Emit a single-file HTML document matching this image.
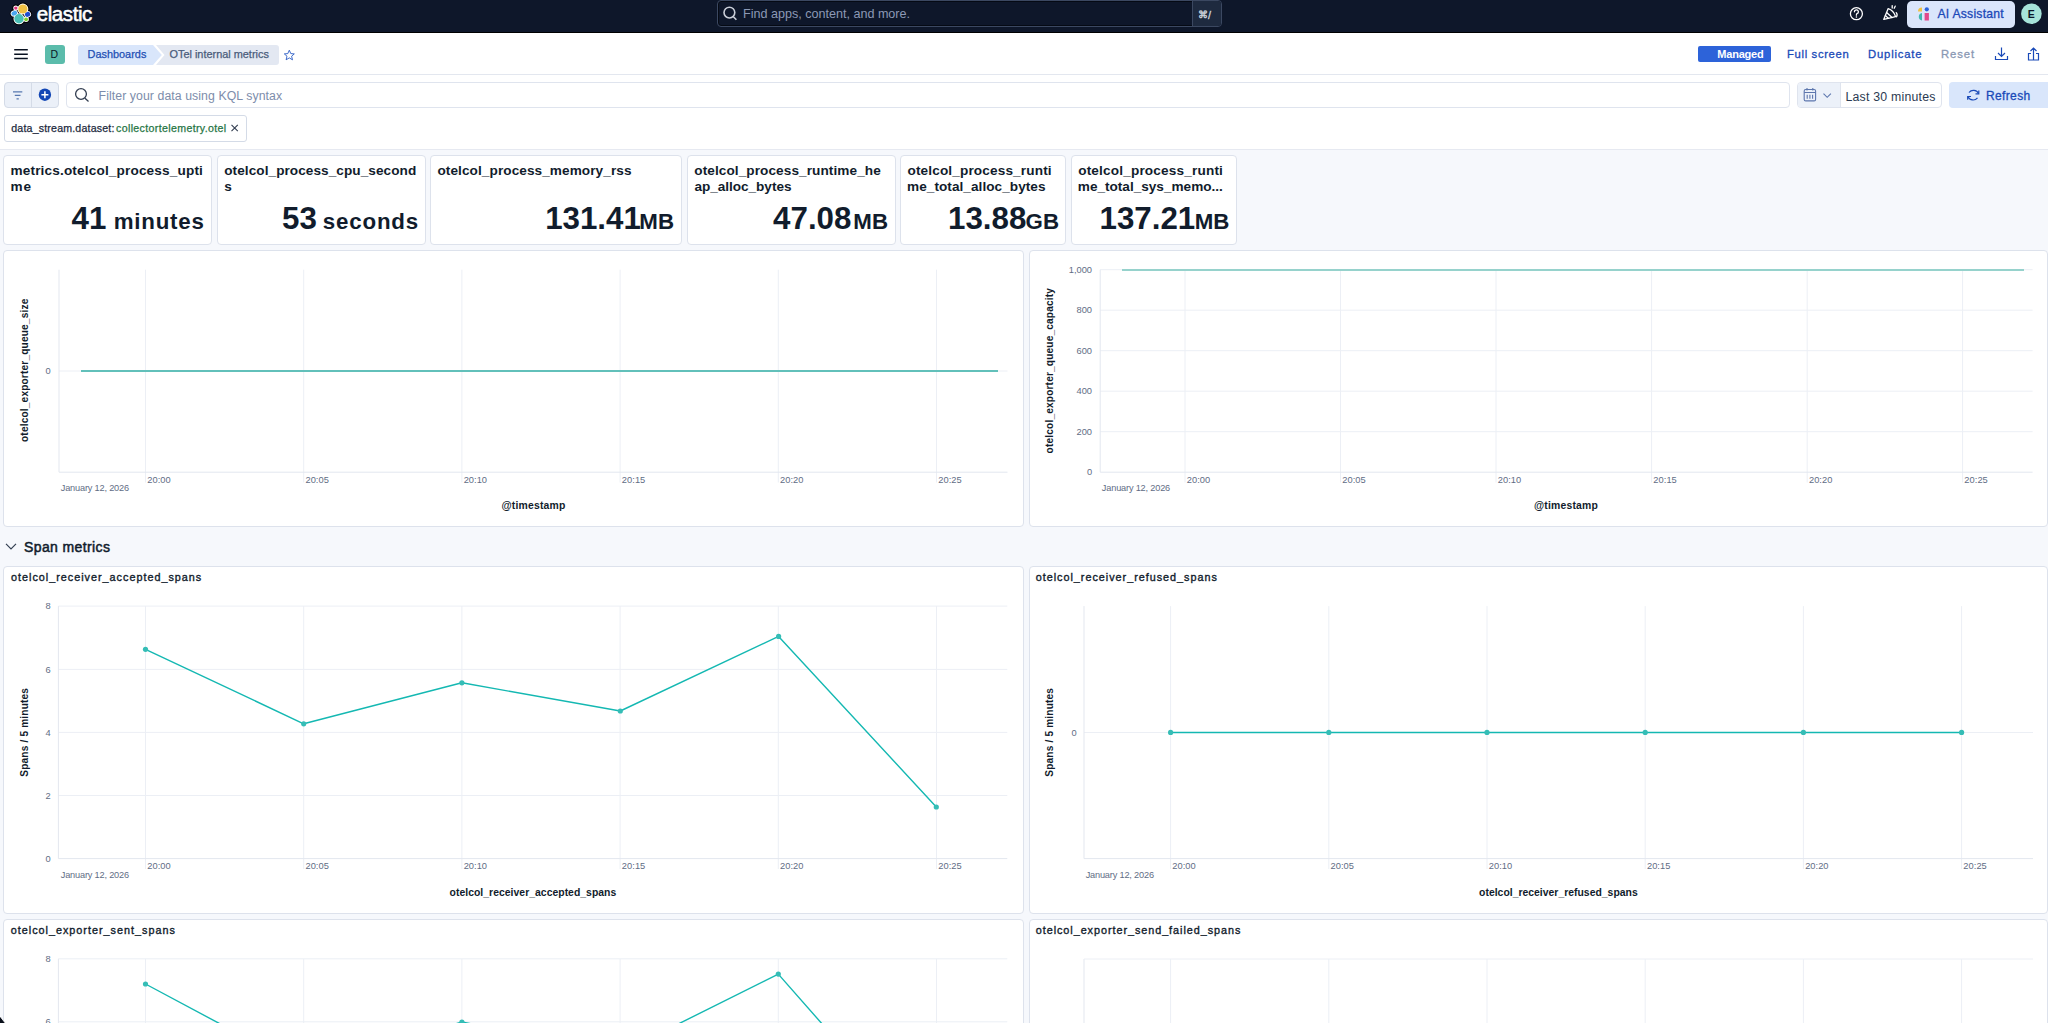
<!DOCTYPE html>
<html><head><meta charset="utf-8"><title>OTel internal metrics - Elastic</title>
<style>
html,body{margin:0;padding:0;}
body{width:2048px;height:1023px;overflow:hidden;position:relative;background:#f6f8fc;font-family:"Liberation Sans",sans-serif;}
.t{position:absolute;white-space:pre;font-family:"Liberation Sans",sans-serif;}
.b{position:absolute;box-sizing:border-box;}
svg{position:absolute;left:0;top:0;}
svg text{font-family:"Liberation Sans",sans-serif;white-space:pre;}
</style></head><body>
<div class="b" style="left:0px;top:0px;width:2048px;height:32px;background:#0e172a;"></div>
<div class="b" style="left:0px;top:32px;width:2048px;height:1px;background:#000;"></div>
<div class="b" style="left:717px;top:0px;width:505px;height:27px;border:1px solid #3b4861;border-radius:4px;background:#0e172a;box-shadow:inset 0 0 0 1px #050a14;"></div>
<div class="b" style="left:1192px;top:1px;width:29px;height:25px;background:#1e2a3f;border-left:1px solid #3b4861;border-radius:0 3px 3px 0;"></div>
<div class="b" style="left:1906.5px;top:0.5px;width:108.0px;height:27.0px;background:#dae5fb;border-radius:5px;"></div>
<div class="b" style="left:0px;top:33px;width:2048px;height:42px;background:#fff;border-bottom:1px solid #e3e7ef;box-shadow:0 1px 2px rgba(40,50,80,.08);"></div>
<div class="b" style="left:45px;top:44.5px;width:19.5px;height:19.5px;background:#5bbcab;border-radius:3px;"></div>
<div class="b" style="left:1698px;top:45.8px;width:73px;height:16.400000000000006px;background:#2d63d9;border-radius:2px;"></div>
<div class="b" style="left:0px;top:75px;width:2048px;height:75px;background:#fff;border-bottom:1px solid #e6e9f1;"></div>
<div class="b" style="left:4px;top:82px;width:55px;height:26px;background:#ebf0f8;border:1px solid #d4dbe7;border-radius:4px;"></div>
<div class="b" style="left:31px;top:83px;width:1px;height:24px;background:#d4dbe7;"></div>
<div class="b" style="left:66px;top:82px;width:1724px;height:26px;background:#fff;border:1px solid #dfe4ee;border-radius:4px;"></div>
<div class="b" style="left:1797px;top:82px;width:145px;height:26px;background:#fff;border:1px solid #dfe4ee;border-radius:4px;"></div>
<div class="b" style="left:1798px;top:83px;width:43px;height:24px;background:#ecf1f9;border-right:1px solid #dfe4ee;border-radius:3px 0 0 3px;"></div>
<div class="b" style="left:1949px;top:82px;width:107px;height:26px;background:#d9e6fb;border-radius:4px;"></div>
<div class="b" style="left:4px;top:115px;width:243px;height:27px;background:#fff;border:1px solid #d4dbe7;border-radius:3px;"></div>
<div class="b" style="left:3px;top:155px;width:209px;height:90px;background:#fff;border:1px solid #dde2ec;border-radius:4px;"></div>
<div class="b" style="left:217px;top:155px;width:209px;height:90px;background:#fff;border:1px solid #dde2ec;border-radius:4px;"></div>
<div class="b" style="left:430px;top:155px;width:252px;height:90px;background:#fff;border:1px solid #dde2ec;border-radius:4px;"></div>
<div class="b" style="left:687px;top:155px;width:209px;height:90px;background:#fff;border:1px solid #dde2ec;border-radius:4px;"></div>
<div class="b" style="left:900px;top:155px;width:166px;height:90px;background:#fff;border:1px solid #dde2ec;border-radius:4px;"></div>
<div class="b" style="left:1071px;top:155px;width:166px;height:90px;background:#fff;border:1px solid #dde2ec;border-radius:4px;"></div>
<div class="b" style="left:3px;top:250px;width:1021px;height:277px;background:#fff;border:1px solid #dde2ec;border-radius:4px;"></div>
<div class="b" style="left:1029px;top:250px;width:1019px;height:277px;background:#fff;border:1px solid #dde2ec;border-radius:4px;"></div>
<div class="b" style="left:3px;top:566px;width:1021px;height:348px;background:#fff;border:1px solid #dde2ec;border-radius:4px;"></div>
<div class="b" style="left:1029px;top:566px;width:1019px;height:348px;background:#fff;border:1px solid #dde2ec;border-radius:4px;"></div>
<div class="b" style="left:3px;top:919px;width:1021px;height:121px;background:#fff;border:1px solid #dde2ec;border-radius:4px;"></div>
<div class="b" style="left:1029px;top:919px;width:1019px;height:121px;background:#fff;border:1px solid #dde2ec;border-radius:4px;"></div>
<svg width="2048" height="1023" viewBox="0 0 2048 1023">
<g stroke="#000" stroke-width="3.6" stroke-linejoin="round"><circle cx="22.9" cy="9.0" r="4.6" fill="#f0c143"/><circle cx="19.0" cy="18.8" r="4.7" fill="#4abfb5"/><circle cx="15.8" cy="8.1" r="1.7" fill="#e0367f"/><ellipse cx="14.3" cy="13.3" rx="2.9" ry="2.2" transform="rotate(-25 14.3 13.3)" fill="#4aa6ef"/><ellipse cx="27.6" cy="14.4" rx="2.7" ry="2.4" transform="rotate(-25 27.6 14.4)" fill="#1f4ccf"/><circle cx="26.1" cy="19.3" r="1.9" fill="#7cd12f"/></g>
<g stroke="#fff" stroke-width="1.7" stroke-linejoin="round"><circle cx="22.9" cy="9.0" r="4.6" fill="#f0c143"/><circle cx="19.0" cy="18.8" r="4.7" fill="#4abfb5"/><circle cx="15.8" cy="8.1" r="1.7" fill="#e0367f"/><ellipse cx="14.3" cy="13.3" rx="2.9" ry="2.2" transform="rotate(-25 14.3 13.3)" fill="#4aa6ef"/><ellipse cx="27.6" cy="14.4" rx="2.7" ry="2.4" transform="rotate(-25 27.6 14.4)" fill="#1f4ccf"/><circle cx="26.1" cy="19.3" r="1.9" fill="#7cd12f"/></g>
<g><circle cx="22.9" cy="9.0" r="4.6" fill="#f0c143"/><circle cx="19.0" cy="18.8" r="4.7" fill="#4abfb5"/><circle cx="15.8" cy="8.1" r="1.7" fill="#e0367f"/><ellipse cx="14.3" cy="13.3" rx="2.9" ry="2.2" transform="rotate(-25 14.3 13.3)" fill="#4aa6ef"/><ellipse cx="27.6" cy="14.4" rx="2.7" ry="2.4" transform="rotate(-25 27.6 14.4)" fill="#1f4ccf"/><circle cx="26.1" cy="19.3" r="1.9" fill="#7cd12f"/></g>
<g fill="none" stroke="#c9ced8" stroke-width="1.6"><circle cx="729.4" cy="12.6" r="5.4"/><path d="M733.4 16.8 L736.4 19.8"/></g>
<g fill="none" stroke="#fff" stroke-width="1.3" stroke-linecap="round"><circle cx="1856.4" cy="13.7" r="6"/><path d="M1854.4 11.8 a2 2 0 1 1 2.6 1.9 q-0.6 0.3 -0.6 1.2 v0.3"/></g><circle cx="1856.4" cy="17" r="0.8" fill="#fff"/>
<g fill="none" stroke="#fff" stroke-width="1.3" stroke-linejoin="round" stroke-linecap="round"><path d="M1883.8 19.3 L1888.2 8.6 Q1893.6 10.2 1895.6 16.6 Z"/><path d="M1886.6 12.6 L1892 17.6 M1885.4 15.6 L1888.6 18.4"/><path d="M1892.2 5.6 v2.4 M1895.2 6.2 l-1 2 M1896.2 12.6 q1.6 1.6 0.4 4.2"/></g>
<g><path d="M1918 11.5 a4 4 0 0 1 4 -4 v4 z" fill="#f1c242"/><circle cx="1926.8" cy="9.3" r="2.1" fill="#2d63d9"/><path d="M1922 13 v7.5 a3.8 3.8 0 0 1 0 -7.5z" fill="#3fb8ae"/><rect x="1924.6" y="13" width="4.3" height="7.5" fill="#e2498a"/></g>
<circle cx="2031.4" cy="13.7" r="10.3" fill="#a6e3d9"/>
<g stroke="#07101f" stroke-width="1.4"><path d="M14.2 49.8 H27.8 M14.2 54.2 H27.8 M14.2 58.5 H27.8"/></g>
<path d="M81 45 H153 L161.8 55 L153 65 H81 a3 3 0 0 1 -3 -3 V48 a3 3 0 0 1 3 -3z" fill="#d9e6fb"/>
<path d="M156 45 H276 a3 3 0 0 1 3 3 V62 a3 3 0 0 1 -3 3 H156 L164.5 55 Z" fill="#e3e8f2"/>
<path d="M289.3 50.2 L290.8 53.6 L294.3 53.9 L291.6 56.2 L292.5 59.8 L289.3 57.9 L286.1 59.8 L287 56.2 L284.3 53.9 L287.8 53.6 Z" fill="none" stroke="#2a5bc4" stroke-width="0.9" stroke-linejoin="round"/>
<g fill="none" stroke="#1a4ab8" stroke-width="1.2"><path d="M2001.5 47.5 V56.5 M1998 53 L2001.5 56.5 L2005 53 M1995.5 56 V59.5 H2007.5 V56"/></g>
<g fill="none" stroke="#1a4ab8" stroke-width="1.2"><path d="M2033.5 59.5 V48 M2030.5 51 L2033.5 48 L2036.5 51 M2031 53.5 H2028.5 V60 H2038.5 V53.5 H2036"/></g>
<g stroke="#5878b0" stroke-width="1.2"><path d="M13 91.8 H22.3 M14.8 95.3 H20.5 M16.5 98.8 H18.8"/></g>
<circle cx="44.9" cy="94.7" r="6.2" fill="#1246b5"/><path d="M44.9 91.2 V98.2 M41.4 94.7 H48.4" stroke="#fff" stroke-width="1.5"/>
<g fill="none" stroke="#343f52" stroke-width="1.3"><circle cx="81" cy="94" r="5.4"/><path d="M85 98.3 L88.5 101.5"/></g>
<g fill="none" stroke="#5c76ad" stroke-width="1.1"><rect x="1804.2" y="89.5" width="11.4" height="11.4" rx="1.5"/><path d="M1804.2 92.5 H1815.6 M1807 88 V90.5 M1812.8 88 V90.5 M1807.2 94.8 V98.8 M1809.9 94.8 V98.8 M1812.6 94.8 V98.8"/></g>
<path d="M1823.5 93.6 L1827.2 97.3 L1830.9 93.6" fill="none" stroke="#5c76ad" stroke-width="1.1"/>
<g fill="none" stroke="#1a4ab8" stroke-width="1.2"><path d="M1969 92.5 A5.6 5.6 0 0 1 1978.5 93.5"/><path d="M1977.5 97.8 A5.6 5.6 0 0 1 1968 96.8"/><path d="M1978.8 90.5 V93.8 H1975.5 M1967.7 99.8 V96.5 H1971"/></g>
<path d="M231.5 124.8 L237.8 131.1 M237.8 124.8 L231.5 131.1" stroke="#343f52" stroke-width="1.1"/>
<path d="M6 543.8 L11 548.8 L16 543.8" fill="none" stroke="#343f52" stroke-width="1.2"/>
<path d="M145.5 269.7 V482.5" stroke="#eceff5" stroke-width="1"/>
<path d="M303.7 269.7 V482.5" stroke="#eceff5" stroke-width="1"/>
<path d="M461.9 269.7 V482.5" stroke="#eceff5" stroke-width="1"/>
<path d="M620.1 269.7 V482.5" stroke="#eceff5" stroke-width="1"/>
<path d="M778.3 269.7 V482.5" stroke="#eceff5" stroke-width="1"/>
<path d="M936.5 269.7 V482.5" stroke="#eceff5" stroke-width="1"/>
<path d="M59 371 H1007.5" stroke="#eceff5" stroke-width="1"/>
<path d="M59 269.7 V472.2 H1007.5" fill="none" stroke="#e3e7ef" stroke-width="1"/>
<path d="M81 371 H998" stroke="#62c0ba" stroke-width="2"/>
<text x="45.49" y="374.30" font-size="9.30" font-weight="400" fill="#5f6d85">0</text>
<text x="147.23" y="482.70" font-size="9.30" font-weight="400" fill="#5f6d85" letter-spacing="0.035">20:00</text>
<text x="305.44" y="482.70" font-size="9.30" font-weight="400" fill="#5f6d85" letter-spacing="0.041">20:05</text>
<text x="463.63" y="482.70" font-size="9.30" font-weight="400" fill="#5f6d85" letter-spacing="0.035">20:10</text>
<text x="621.84" y="482.70" font-size="9.30" font-weight="400" fill="#5f6d85" letter-spacing="0.041">20:15</text>
<text x="780.03" y="482.70" font-size="9.30" font-weight="400" fill="#5f6d85" letter-spacing="0.035">20:20</text>
<text x="938.24" y="482.70" font-size="9.30" font-weight="400" fill="#5f6d85" letter-spacing="0.041">20:25</text>
<text x="60.76" y="491.00" font-size="9.20" font-weight="400" fill="#5f6d85" letter-spacing="-0.178">January 12, 2026</text>
<text transform="translate(24.10,370.30) rotate(-90)" x="-71.70" y="3.66" font-size="10.10" font-weight="700" fill="#111c2c" letter-spacing="0.180">otelcol_exporter_queue_size</text>
<text x="501.40" y="509.00" font-size="10.40" font-weight="700" fill="#111c2c" letter-spacing="0.208">@timestamp</text>
<path d="M1185 269.7 V482.5" stroke="#eceff5" stroke-width="1"/>
<path d="M1340.5 269.7 V482.5" stroke="#eceff5" stroke-width="1"/>
<path d="M1496 269.7 V482.5" stroke="#eceff5" stroke-width="1"/>
<path d="M1651.6 269.7 V482.5" stroke="#eceff5" stroke-width="1"/>
<path d="M1807.2 269.7 V482.5" stroke="#eceff5" stroke-width="1"/>
<path d="M1962.6 269.7 V482.5" stroke="#eceff5" stroke-width="1"/>
<path d="M1100.2 310.2 H2032.6" stroke="#eceff5" stroke-width="1"/>
<path d="M1100.2 350.7 H2032.6" stroke="#eceff5" stroke-width="1"/>
<path d="M1100.2 391.2 H2032.6" stroke="#eceff5" stroke-width="1"/>
<path d="M1100.2 431.7 H2032.6" stroke="#eceff5" stroke-width="1"/>
<path d="M1100.2 269.7 H2032.6" stroke="#eceff5" stroke-width="1"/>
<path d="M1100.2 269.7 V472.2 H2032.6" fill="none" stroke="#e3e7ef" stroke-width="1"/>
<path d="M1122 270 H2024" stroke="#96d2cc" stroke-width="2"/>
<text x="1068.78" y="272.70" font-size="9.30" font-weight="400" fill="#5f6d85">1,000</text>
<text x="1076.54" y="313.40" font-size="9.30" font-weight="400" fill="#5f6d85">800</text>
<text x="1076.54" y="353.90" font-size="9.30" font-weight="400" fill="#5f6d85">600</text>
<text x="1076.54" y="394.40" font-size="9.30" font-weight="400" fill="#5f6d85">400</text>
<text x="1076.54" y="434.90" font-size="9.30" font-weight="400" fill="#5f6d85">200</text>
<text x="1086.89" y="475.20" font-size="9.30" font-weight="400" fill="#5f6d85">0</text>
<text x="1186.74" y="482.70" font-size="9.30" font-weight="400" fill="#5f6d85" letter-spacing="0.035">20:00</text>
<text x="1342.24" y="482.70" font-size="9.30" font-weight="400" fill="#5f6d85" letter-spacing="0.041">20:05</text>
<text x="1497.74" y="482.70" font-size="9.30" font-weight="400" fill="#5f6d85" letter-spacing="0.035">20:10</text>
<text x="1653.34" y="482.70" font-size="9.30" font-weight="400" fill="#5f6d85" letter-spacing="0.041">20:15</text>
<text x="1808.94" y="482.70" font-size="9.30" font-weight="400" fill="#5f6d85" letter-spacing="0.035">20:20</text>
<text x="1964.34" y="482.70" font-size="9.30" font-weight="400" fill="#5f6d85" letter-spacing="0.041">20:25</text>
<text x="1101.86" y="491.00" font-size="9.20" font-weight="400" fill="#5f6d85" letter-spacing="-0.178">January 12, 2026</text>
<text transform="translate(1049.10,370.50) rotate(-90)" x="-82.90" y="3.66" font-size="10.10" font-weight="700" fill="#111c2c" letter-spacing="0.182">otelcol_exporter_queue_capacity</text>
<text x="1533.90" y="509.00" font-size="10.40" font-weight="700" fill="#111c2c" letter-spacing="0.208">@timestamp</text>
<path d="M145.5 606.1 V869" stroke="#eceff5" stroke-width="1"/>
<path d="M303.7 606.1 V869" stroke="#eceff5" stroke-width="1"/>
<path d="M461.9 606.1 V869" stroke="#eceff5" stroke-width="1"/>
<path d="M620.1 606.1 V869" stroke="#eceff5" stroke-width="1"/>
<path d="M778.3 606.1 V869" stroke="#eceff5" stroke-width="1"/>
<path d="M936.5 606.1 V869" stroke="#eceff5" stroke-width="1"/>
<path d="M58.4 606.1 H1007.3" stroke="#eceff5" stroke-width="1"/>
<path d="M58.4 669.4 H1007.3" stroke="#eceff5" stroke-width="1"/>
<path d="M58.4 732.4 H1007.3" stroke="#eceff5" stroke-width="1"/>
<path d="M58.4 795.5 H1007.3" stroke="#eceff5" stroke-width="1"/>
<path d="M58.4 606.1 V858.6 H1007.3" fill="none" stroke="#e3e7ef" stroke-width="1"/>
<text x="45.53" y="609.40" font-size="9.30" font-weight="400" fill="#5f6d85">8</text>
<text x="45.53" y="672.70" font-size="9.30" font-weight="400" fill="#5f6d85">6</text>
<text x="45.39" y="735.70" font-size="9.30" font-weight="400" fill="#5f6d85">4</text>
<text x="45.60" y="798.80" font-size="9.30" font-weight="400" fill="#5f6d85">2</text>
<text x="45.49" y="861.90" font-size="9.30" font-weight="400" fill="#5f6d85">0</text>
<polyline points="145.5,649.3 303.7,723.8 461.9,682.8 620.3,711 778.6,636.4 936.3,807" fill="none" stroke="#14b8b2" stroke-width="1.4" stroke-linejoin="round"/>
<circle cx="145.5" cy="649.3" r="2.6" fill="#35bdb6"/>
<circle cx="303.7" cy="723.8" r="2.6" fill="#35bdb6"/>
<circle cx="461.9" cy="682.8" r="2.6" fill="#35bdb6"/>
<circle cx="620.3" cy="711" r="2.6" fill="#35bdb6"/>
<circle cx="778.6" cy="636.4" r="2.6" fill="#35bdb6"/>
<circle cx="936.3" cy="807" r="2.6" fill="#35bdb6"/>
<text x="147.23" y="869.40" font-size="9.30" font-weight="400" fill="#5f6d85" letter-spacing="0.035">20:00</text>
<text x="305.44" y="869.40" font-size="9.30" font-weight="400" fill="#5f6d85" letter-spacing="0.041">20:05</text>
<text x="463.63" y="869.40" font-size="9.30" font-weight="400" fill="#5f6d85" letter-spacing="0.035">20:10</text>
<text x="621.84" y="869.40" font-size="9.30" font-weight="400" fill="#5f6d85" letter-spacing="0.041">20:15</text>
<text x="780.03" y="869.40" font-size="9.30" font-weight="400" fill="#5f6d85" letter-spacing="0.035">20:20</text>
<text x="938.24" y="869.40" font-size="9.30" font-weight="400" fill="#5f6d85" letter-spacing="0.041">20:25</text>
<text x="60.76" y="878.00" font-size="9.20" font-weight="400" fill="#5f6d85" letter-spacing="-0.178">January 12, 2026</text>
<text transform="translate(24.10,732.40) rotate(-90)" x="-44.30" y="3.66" font-size="10.10" font-weight="700" fill="#111c2c" letter-spacing="0.177">Spans / 5 minutes</text>
<text x="449.58" y="896.00" font-size="10.40" font-weight="700" fill="#111c2c" letter-spacing="0.031">otelcol_receiver_accepted_spans</text>
<path d="M1170.6 606.1 V869" stroke="#eceff5" stroke-width="1"/>
<path d="M1328.8 606.1 V869" stroke="#eceff5" stroke-width="1"/>
<path d="M1487 606.1 V869" stroke="#eceff5" stroke-width="1"/>
<path d="M1645.2 606.1 V869" stroke="#eceff5" stroke-width="1"/>
<path d="M1803.4 606.1 V869" stroke="#eceff5" stroke-width="1"/>
<path d="M1961.6 606.1 V869" stroke="#eceff5" stroke-width="1"/>
<path d="M1084 732.5 H2033" stroke="#eceff5" stroke-width="1"/>
<path d="M1084 606.1 V858.6 H2033" fill="none" stroke="#e3e7ef" stroke-width="1"/>
<text x="1071.49" y="735.70" font-size="9.30" font-weight="400" fill="#5f6d85">0</text>
<path d="M1170.6 732.5 H1961.6" stroke="#14b8b2" stroke-width="1.3"/>
<circle cx="1170.6" cy="732.4" r="2.6" fill="#35bdb6"/>
<circle cx="1328.8" cy="732.4" r="2.6" fill="#35bdb6"/>
<circle cx="1487" cy="732.4" r="2.6" fill="#35bdb6"/>
<circle cx="1645.2" cy="732.4" r="2.6" fill="#35bdb6"/>
<circle cx="1803.4" cy="732.4" r="2.6" fill="#35bdb6"/>
<circle cx="1961.6" cy="732.4" r="2.6" fill="#35bdb6"/>
<text x="1172.34" y="869.40" font-size="9.30" font-weight="400" fill="#5f6d85" letter-spacing="0.035">20:00</text>
<text x="1330.54" y="869.40" font-size="9.30" font-weight="400" fill="#5f6d85" letter-spacing="0.041">20:05</text>
<text x="1488.74" y="869.40" font-size="9.30" font-weight="400" fill="#5f6d85" letter-spacing="0.035">20:10</text>
<text x="1646.94" y="869.40" font-size="9.30" font-weight="400" fill="#5f6d85" letter-spacing="0.041">20:15</text>
<text x="1805.14" y="869.40" font-size="9.30" font-weight="400" fill="#5f6d85" letter-spacing="0.035">20:20</text>
<text x="1963.34" y="869.40" font-size="9.30" font-weight="400" fill="#5f6d85" letter-spacing="0.041">20:25</text>
<text x="1085.66" y="878.00" font-size="9.20" font-weight="400" fill="#5f6d85" letter-spacing="-0.178">January 12, 2026</text>
<text transform="translate(1049.40,732.40) rotate(-90)" x="-44.30" y="3.66" font-size="10.10" font-weight="700" fill="#111c2c" letter-spacing="0.177">Spans / 5 minutes</text>
<text x="1479.08" y="896.00" font-size="10.40" font-weight="700" fill="#111c2c" letter-spacing="0.012">otelcol_receiver_refused_spans</text>
<path d="M145.5 958.8 V1023" stroke="#eceff5" stroke-width="1"/>
<path d="M303.7 958.8 V1023" stroke="#eceff5" stroke-width="1"/>
<path d="M461.9 958.8 V1023" stroke="#eceff5" stroke-width="1"/>
<path d="M620.1 958.8 V1023" stroke="#eceff5" stroke-width="1"/>
<path d="M778.3 958.8 V1023" stroke="#eceff5" stroke-width="1"/>
<path d="M936.5 958.8 V1023" stroke="#eceff5" stroke-width="1"/>
<path d="M58.4 958.8 H1007.3" stroke="#eceff5" stroke-width="1"/>
<path d="M58.4 1021.8 H1007.3" stroke="#eceff5" stroke-width="1"/>
<path d="M58.4 958.8 V1100 H1007.3" fill="none" stroke="#e3e7ef" stroke-width="1"/>
<text x="45.53" y="962.10" font-size="9.30" font-weight="400" fill="#5f6d85">8</text>
<text x="45.53" y="1025.10" font-size="9.30" font-weight="400" fill="#5f6d85">6</text>
<polyline points="145.5,984 303.7,1068.5 461.9,1022 620.1,1053 778.3,974.1 936.5,1154" fill="none" stroke="#14b8b2" stroke-width="1.4" stroke-linejoin="round"/>
<circle cx="145.5" cy="984" r="2.6" fill="#35bdb6"/>
<circle cx="303.7" cy="1068.5" r="2.6" fill="#35bdb6"/>
<circle cx="461.9" cy="1022" r="2.6" fill="#35bdb6"/>
<circle cx="620.1" cy="1053" r="2.6" fill="#35bdb6"/>
<circle cx="778.3" cy="974.1" r="2.6" fill="#35bdb6"/>
<circle cx="936.5" cy="1154" r="2.6" fill="#35bdb6"/>
<path d="M1170.6 959 V1023" stroke="#eceff5" stroke-width="1"/>
<path d="M1328.8 959 V1023" stroke="#eceff5" stroke-width="1"/>
<path d="M1487 959 V1023" stroke="#eceff5" stroke-width="1"/>
<path d="M1645.2 959 V1023" stroke="#eceff5" stroke-width="1"/>
<path d="M1803.4 959 V1023" stroke="#eceff5" stroke-width="1"/>
<path d="M1961.6 959 V1023" stroke="#eceff5" stroke-width="1"/>
<path d="M1084 959 V1100 H2033" fill="none" stroke="#e3e7ef" stroke-width="1"/>
<path d="M1084 959 H2033" stroke="#eceff5" stroke-width="1"/>
<path d="M-1 1015 L6 1024 H-1 Z" fill="#0a0f1a" stroke="#fff" stroke-width="0.8"/>
</svg>
<span class="t" style="left:36.73px;top:3.95px;font-size:20.50px;line-height:20.50px;font-weight:400;color:#ffffff;letter-spacing:-0.414px;-webkit-text-stroke:0.55px #fff;">elastic</span>
<span class="t" style="left:742.96px;top:7.93px;font-size:12.60px;line-height:12.60px;font-weight:400;color:#8c99b5;letter-spacing:-0.008px;">Find apps, content, and more.</span>
<span class="t" style="left:1198.05px;top:10.46px;font-size:9.50px;line-height:9.50px;font-weight:400;color:#d0d5de;letter-spacing:0.000px;-webkit-text-stroke:0.4px currentColor;">⌘</span>
<span class="t" style="left:1208.00px;top:9.69px;font-size:11.00px;line-height:11.00px;font-weight:400;color:#d0d5de;letter-spacing:0.000px;-webkit-text-stroke:0.3px currentColor;">/</span>
<span class="t" style="left:1937.47px;top:7.97px;font-size:12.20px;line-height:12.20px;font-weight:400;color:#1c49b8;letter-spacing:0.234px;-webkit-text-stroke:0.3px currentColor;">AI Assistant</span>
<span class="t" style="left:2027.79px;top:8.71px;font-size:10.50px;line-height:10.50px;font-weight:700;color:#0b1628;letter-spacing:0.000px;">E</span>
<span class="t" style="left:50.43px;top:48.51px;font-size:10.50px;line-height:10.50px;font-weight:400;color:#0b1628;letter-spacing:0.000px;">D</span>
<span class="t" style="left:87.50px;top:48.57px;font-size:10.90px;line-height:10.90px;font-weight:400;color:#1e4fb4;letter-spacing:0.011px;-webkit-text-stroke:0.25px currentColor;">Dashboards</span>
<span class="t" style="left:169.48px;top:48.57px;font-size:10.90px;line-height:10.90px;font-weight:400;color:#4a5c7b;letter-spacing:0.007px;-webkit-text-stroke:0.25px currentColor;">OTel internal metrics</span>
<span class="t" style="left:1717.26px;top:49.09px;font-size:11.00px;line-height:11.00px;font-weight:700;color:#ffffff;letter-spacing:-0.200px;">Managed</span>
<span class="t" style="left:1787.07px;top:48.93px;font-size:11.30px;line-height:11.30px;font-weight:400;color:#1a4ab8;letter-spacing:0.638px;-webkit-text-stroke:0.3px currentColor;">Full screen</span>
<span class="t" style="left:1868.07px;top:48.93px;font-size:11.30px;line-height:11.30px;font-weight:400;color:#1a4ab8;letter-spacing:0.790px;-webkit-text-stroke:0.3px currentColor;">Duplicate</span>
<span class="t" style="left:1941.07px;top:48.93px;font-size:11.30px;line-height:11.30px;font-weight:400;color:#8a98b3;letter-spacing:0.874px;-webkit-text-stroke:0.3px currentColor;">Reset</span>
<span class="t" style="left:98.59px;top:90.09px;font-size:12.30px;line-height:12.30px;font-weight:400;color:#7d8dab;letter-spacing:0.068px;">Filter your data using KQL syntax</span>
<span class="t" style="left:1845.39px;top:90.59px;font-size:12.30px;line-height:12.30px;font-weight:400;color:#2b3a51;letter-spacing:0.229px;">Last 30 minutes</span>
<span class="t" style="left:1986.01px;top:90.14px;font-size:12.00px;line-height:12.00px;font-weight:400;color:#1a4ab8;letter-spacing:0.357px;-webkit-text-stroke:0.3px currentColor;">Refresh</span>
<span class="t" style="left:11.25px;top:123.33px;font-size:10.60px;line-height:10.60px;font-weight:400;color:#1d2a3e;letter-spacing:0.190px;-webkit-text-stroke:0.25px currentColor;">data_stream.dataset:</span>
<span class="t" style="left:116.05px;top:123.33px;font-size:10.60px;line-height:10.60px;font-weight:400;color:#267544;letter-spacing:0.357px;-webkit-text-stroke:0.25px currentColor;">collectortelemetry.otel</span>
<span class="t" style="left:10.52px;top:164.49px;font-size:13.60px;line-height:13.60px;font-weight:700;color:#111c2c;letter-spacing:0.157px;">metrics.otelcol_process_upti</span>
<span class="t" style="left:10.52px;top:180.29px;font-size:13.60px;line-height:13.60px;font-weight:700;color:#111c2c;letter-spacing:0.774px;">me</span>
<span class="t" style="left:224.26px;top:164.49px;font-size:13.60px;line-height:13.60px;font-weight:700;color:#111c2c;letter-spacing:0.066px;">otelcol_process_cpu_second</span>
<span class="t" style="left:224.32px;top:180.29px;font-size:13.60px;line-height:13.60px;font-weight:700;color:#111c2c;letter-spacing:0.000px;">s</span>
<span class="t" style="left:437.46px;top:164.49px;font-size:13.60px;line-height:13.60px;font-weight:700;color:#111c2c;letter-spacing:0.084px;">otelcol_process_memory_rss</span>
<span class="t" style="left:694.26px;top:164.49px;font-size:13.60px;line-height:13.60px;font-weight:700;color:#111c2c;letter-spacing:0.087px;">otelcol_process_runtime_he</span>
<span class="t" style="left:694.39px;top:180.29px;font-size:13.60px;line-height:13.60px;font-weight:700;color:#111c2c;letter-spacing:-0.028px;">ap_alloc_bytes</span>
<span class="t" style="left:907.46px;top:164.49px;font-size:13.60px;line-height:13.60px;font-weight:700;color:#111c2c;letter-spacing:0.143px;">otelcol_process_runti</span>
<span class="t" style="left:907.12px;top:180.29px;font-size:13.60px;line-height:13.60px;font-weight:700;color:#111c2c;letter-spacing:0.045px;">me_total_alloc_bytes</span>
<span class="t" style="left:1078.16px;top:164.49px;font-size:13.60px;line-height:13.60px;font-weight:700;color:#111c2c;letter-spacing:0.173px;">otelcol_process_runti</span>
<span class="t" style="left:1077.82px;top:180.29px;font-size:13.60px;line-height:13.60px;font-weight:700;color:#111c2c;letter-spacing:-0.002px;">me_total_sys_memo...</span>
<span class="t" style="left:71.62px;top:203.40px;font-size:31.30px;line-height:31.30px;font-weight:700;color:#111c2c;">41</span>
<span class="t" style="left:113.65px;top:211.02px;font-size:22.30px;line-height:22.30px;font-weight:700;color:#111c2c;letter-spacing:0.796px;">minutes</span>
<span class="t" style="left:282.05px;top:203.40px;font-size:31.30px;line-height:31.30px;font-weight:700;color:#111c2c;">53</span>
<span class="t" style="left:322.82px;top:211.02px;font-size:22.30px;line-height:22.30px;font-weight:700;color:#111c2c;letter-spacing:0.824px;">seconds</span>
<span class="t" style="left:545.16px;top:203.40px;font-size:31.30px;line-height:31.30px;font-weight:700;color:#111c2c;">131.41</span>
<span class="t" style="left:639.33px;top:211.02px;font-size:22.30px;line-height:22.30px;font-weight:700;color:#111c2c;">MB</span>
<span class="t" style="left:773.11px;top:203.40px;font-size:31.30px;line-height:31.30px;font-weight:700;color:#111c2c;">47.08</span>
<span class="t" style="left:853.33px;top:211.02px;font-size:22.30px;line-height:22.30px;font-weight:700;color:#111c2c;">MB</span>
<span class="t" style="left:948.01px;top:203.40px;font-size:31.30px;line-height:31.30px;font-weight:700;color:#111c2c;">13.88</span>
<span class="t" style="left:1025.55px;top:211.02px;font-size:22.30px;line-height:22.30px;font-weight:700;color:#111c2c;">GB</span>
<span class="t" style="left:1099.56px;top:203.40px;font-size:31.30px;line-height:31.30px;font-weight:700;color:#111c2c;">137.21</span>
<span class="t" style="left:1194.63px;top:211.02px;font-size:22.30px;line-height:22.30px;font-weight:700;color:#111c2c;">MB</span>
<span class="t" style="left:24.07px;top:540.15px;font-size:14.00px;line-height:14.00px;font-weight:400;color:#111c2c;letter-spacing:0.375px;-webkit-text-stroke:0.5px currentColor;">Span metrics</span>
<span class="t" style="left:11.04px;top:572.06px;font-size:10.80px;line-height:10.80px;font-weight:400;color:#111c2c;letter-spacing:0.998px;-webkit-text-stroke:0.35px currentColor;">otelcol_receiver_accepted_spans</span>
<span class="t" style="left:1035.74px;top:572.06px;font-size:10.80px;line-height:10.80px;font-weight:400;color:#111c2c;letter-spacing:0.988px;-webkit-text-stroke:0.35px currentColor;">otelcol_receiver_refused_spans</span>
<span class="t" style="left:10.74px;top:925.26px;font-size:10.80px;line-height:10.80px;font-weight:400;color:#111c2c;letter-spacing:1.001px;-webkit-text-stroke:0.35px currentColor;">otelcol_exporter_sent_spans</span>
<span class="t" style="left:1035.74px;top:925.26px;font-size:10.80px;line-height:10.80px;font-weight:400;color:#111c2c;letter-spacing:0.961px;-webkit-text-stroke:0.35px currentColor;">otelcol_exporter_send_failed_spans</span>
</body></html>
